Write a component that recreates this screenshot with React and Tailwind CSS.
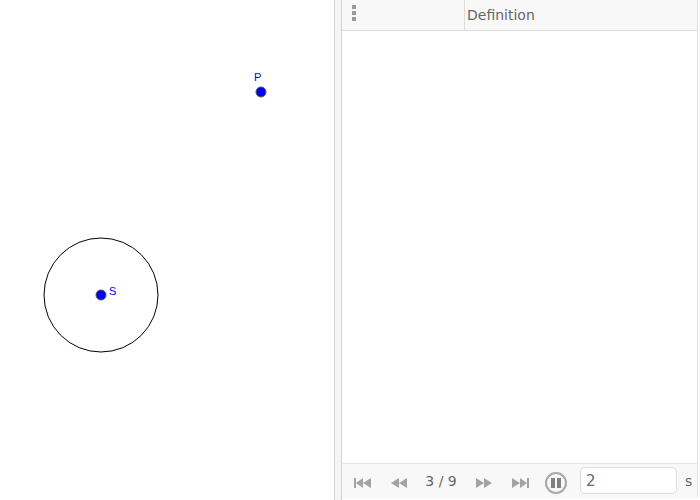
const font = { fontFamily: "'DejaVu Sans', sans-serif" };

function SkipIcon({ dir }) {
  return (
    <svg width="18" height="10" viewBox="0 0 18 10" className={dir === "left" ? "" : "-scale-x-100"}>
      <rect x="0" y="0" width="2" height="10" fill="#a3a3a3" />
      <path d="M2 5 L9 0 V10 Z M9 5 L17 0 V10 Z" fill="#a3a3a3" />
    </svg>
  );
}

function StepIcon({ dir }) {
  return (
    <svg width="17" height="10" viewBox="0 0 17 10" className={dir === "left" ? "" : "-scale-x-100"}>
      <path d="M0 5 L8 0 V10 Z M8 5 L16 0 V10 Z" fill="#a3a3a3" />
    </svg>
  );
}

export default function App() {
  return (
    <div className="flex w-[700px] h-[500px] overflow-hidden bg-white" style={font}>
      {/* graphics view */}
      <div className="relative w-[334px] h-full">
        <svg width="334" height="500" className="absolute inset-0">
          <circle cx="101" cy="295" r="57" fill="none" stroke="#000" strokeWidth="1" />
          <circle cx="101" cy="295" r="5" fill="#0000ff" stroke="#555" strokeWidth="1" />
          <circle cx="261" cy="92" r="5" fill="#0000ff" stroke="#555" strokeWidth="1" />
        </svg>
        <span className="absolute left-[109px] top-[284px] text-[11px] leading-[14px] text-[#0000ff]" style={{ fontFamily: "'Liberation Sans', sans-serif" }}>S</span>
        <span className="absolute left-[254px] top-[70px] text-[11px] leading-[14px] text-[#0000ff]" style={{ fontFamily: "'Liberation Sans', sans-serif" }}>P</span>
      </div>

      {/* divider */}
      <div className="w-[8px] h-full bg-[#f5f5f5] border-x border-[#d4d4d4]" />

      {/* algebra table */}
      <div className="flex flex-col w-[356px] h-[498px] border-r border-[#e0e0e0]">
        <div className="flex h-[31px] bg-[#f8f8f8] border-b border-[#dcdcdc]">
          <div className="flex w-[123px] pl-[10px] pt-[5px] border-r border-[#dcdcdc]">
            <div className="flex flex-col gap-[2px]">
              <div className="w-[4px] h-[4px] bg-[#999]" />
              <div className="w-[4px] h-[4px] bg-[#999]" />
              <div className="w-[4px] h-[4px] bg-[#999]" />
            </div>
          </div>
          <div className="pl-[2px] text-[14px] leading-[30px] text-[#666]">Definition</div>
        </div>

        <div className="flex-1" />

        {/* playback bar */}
        <div className="flex items-center h-[35px] bg-[#f8f8f8] border-t border-[#e6e6e6] text-[#666]">
          <div className="ml-[12px] mt-[3px]"><SkipIcon dir="left" /></div>
          <div className="ml-[19px] mt-[3px]"><StepIcon dir="left" /></div>
          <span className="ml-[16px] w-[34px] text-center text-[14px] leading-none -mt-[1px]">3 / 9</span>
          <div className="ml-[17px] mt-[3px]"><StepIcon dir="right" /></div>
          <div className="ml-[19px] mt-[3px]"><SkipIcon dir="right" /></div>
          <div className="flex items-center justify-center gap-[2px] ml-[16px] mt-[3px] w-[22px] h-[22px] rounded-full border-2 border-[#a8a8a8]">
            <div className="w-[4px] h-[10px] bg-[#808080]" />
            <div className="w-[4px] h-[10px] bg-[#808080]" />
          </div>
          <div className="ml-[13px] w-[97px] h-[27px] pl-[5px] rounded-[5px] border border-[#dcdcdc] bg-white text-[15px] leading-[26px] -mt-[1px]">2</div>
          <span className="ml-[8px] text-[14px]">s</span>
        </div>
      </div>
    </div>
  );
}
